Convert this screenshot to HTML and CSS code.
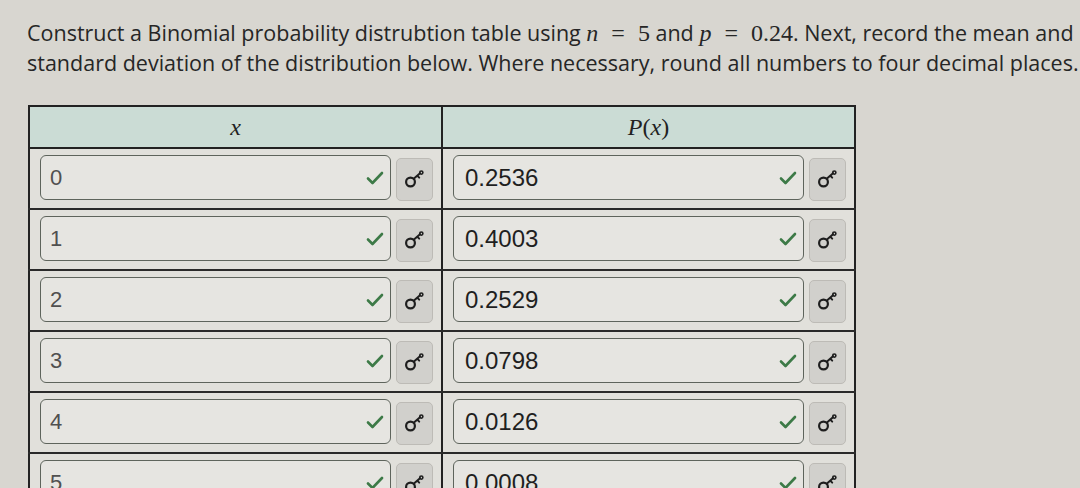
FILE: index.html
```html
<!DOCTYPE html>
<html>
<head>
    <title>Binomial distribution table</title>
    <link rel="stylesheet" href="styles.css">
</head>
<body>
    <div class="page">
        <p class="prompt">
            Construct a Binomial probability distrubtion table using <span class="math"><i>n</i> = 5</span> and <span class="math"><i>p</i> = 0.24</span>. Next, record the mean and<br>
            standard deviation of the distribution below. Where necessary, round all numbers to four decimal places.
        </p>

        <table class="dist">
            <thead>
                <tr>
                    <th><span class="math"><i>x</i></span></th>
                    <th><span class="math"><i>P</i>(<i>x</i>)</span></th>
                </tr>
            </thead>
            <tbody id="rows"></tbody>
        </table>
    </div>

    <script>
        const data = [
            ['0', '0.2536'],
            ['1', '0.4003'],
            ['2', '0.2529'],
            ['3', '0.0798'],
            ['4', '0.0126'],
            ['5', '0.0008']
        ];

        // check mark and key button icons
        const checkSvg = '<svg class="check" width="18" height="14" viewBox="0 0 18 14"><path d="M2 7.5 L6.5 12 L16 2" fill="none" stroke="#3d7a47" stroke-width="2.6" stroke-linecap="round" stroke-linejoin="round"/></svg>';
        const keySvg = '<svg width="22" height="18" viewBox="0 0 22 18"><circle cx="6.5" cy="12" r="4.4" fill="none" stroke="#1e1e1e" stroke-width="2.2"/><path d="M9.7 8.8 L16 3.2 M13.2 5.6 L15.2 7.6" fill="none" stroke="#1e1e1e" stroke-width="2" stroke-linecap="round"/><circle cx="17.3" cy="2.6" r="1.6" fill="none" stroke="#1e1e1e" stroke-width="1.6"/></svg>';

        function cell(value, cls) {
            return '<td><div class="cell">' +
                '<div class="field ' + cls + '"><span>' + value + '</span>' + checkSvg + '</div>' +
                '<button class="key">' + keySvg + '</button>' +
                '</div></td>';
        }

        const tbody = document.getElementById('rows');
        data.forEach(row => {
            const tr = document.createElement('tr');
            tr.innerHTML = cell(row[0], 'x-val') + cell(row[1], 'p-val');
            tbody.appendChild(tr);
        });
    </script>
</body>
</html>
```

FILE: styles.css
```css
html, body {
    margin: 0;
    height: 488px;
    overflow: hidden;
}
body {
    background: #d8d6d0;
    font-family: "Open Sans", "Liberation Sans", sans-serif;
    color: #262626;
}
.page {
    padding: 18px 0 0 27px;
}
.prompt {
    margin: 0;
    font-size: 21.5px;
    line-height: 30px;
    white-space: nowrap;
}
.math {
    font-family: "Liberation Serif", "DejaVu Serif", serif;
    font-size: 24px;
    word-spacing: 7px;
}
.dist {
    margin-top: 27px;
    margin-left: 1px;
    border-collapse: collapse;
    border: 2px solid #222;
    width: 828px;
    table-layout: fixed;
}
.dist th {
    background: #cbdcd5;
    height: 40px;
    padding: 0;
    font-weight: normal;
    border-right: 2px solid #222;
    border-bottom: 2px solid #222;
    color: #222;
}
.dist th .math {
    font-size: 24px;
}
.dist td {
    background: #e1e0db;
    padding: 0;
    height: 59px;
    border-right: 2px solid #222;
    border-bottom: 2px solid #2a2a2a;
}
.cell {
    display: flex;
    align-items: center;
    gap: 5px;
    padding: 3px 8px 6px 10px;
}
.field {
    flex: 1;
    height: 45px;
    box-sizing: border-box;
    display: flex;
    align-items: center;
    justify-content: space-between;
    padding: 2px 6px 0 11px;
    background: #e6e5e1;
    border: 1.5px solid #5e645c;
    border-radius: 6px;
    font-family: "Liberation Sans", Roboto, sans-serif;
}
.x-val {
    font-size: 22px;
    color: #505050;
    padding-left: 9px;
}
.p-val {
    font-size: 24px;
    color: #1f1f1f;
}
.key {
    width: 37px;
    height: 43px;
    margin-top: 4px;
    padding: 0;
    display: flex;
    align-items: center;
    justify-content: center;
    background: #d1d0cc;
    border: 1px solid #bdbbb6;
    border-radius: 5px;
}
```
